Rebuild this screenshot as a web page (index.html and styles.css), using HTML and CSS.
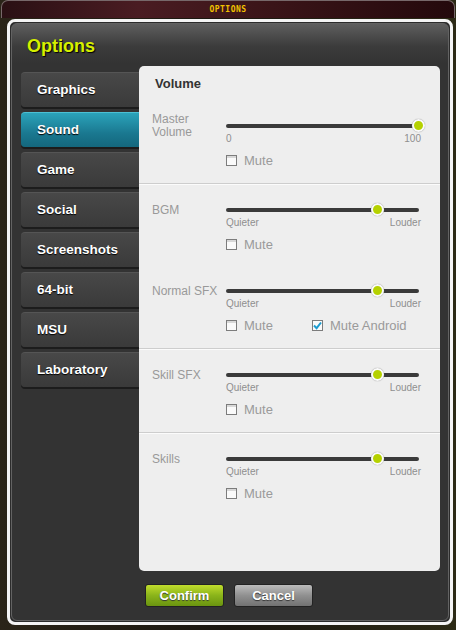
FILE: index.html
```html
<!DOCTYPE html>
<html>

<head>
	<title>Options</title>
	<link rel="stylesheet" href="styles.css">
</head>

<body>
	<div class="window">
		<div class="titlebar">OPTIONS</div>
		<div class="frame">
			<div class="frame-inner">
				<h1 class="title">Options</h1>
				<div class="content">
					<ul class="tabs">
						<li class="tab">Graphics</li>
						<li class="tab active">Sound</li>
						<li class="tab">Game</li>
						<li class="tab">Social</li>
						<li class="tab">Screenshots</li>
						<li class="tab">64-bit</li>
						<li class="tab">MSU</li>
						<li class="tab">Laboratory</li>
					</ul>

					<div class="panel">
						<div class="group first">
							<h2>Volume</h2>
							<div class="setting master">
								<div class="label">Master<br>Volume</div>
								<div class="control">
									<div class="slider">
										<div class="track"></div>
										<div class="thumb" style="left: 100%"></div>
									</div>
									<div class="scale"><span>0</span><span>100</span></div>
									<div class="checks">
										<label class="check"><span class="box"></span>Mute</label>
									</div>
								</div>
							</div>
						</div>

						<div class="group">
							<div class="setting">
								<div class="label">BGM</div>
								<div class="control">
									<div class="slider">
										<div class="track"></div>
										<div class="thumb" style="left: 78.8%"></div>
									</div>
									<div class="scale"><span>Quieter</span><span>Louder</span></div>
									<div class="checks">
										<label class="check"><span class="box"></span>Mute</label>
									</div>
								</div>
							</div>
							<div class="setting next">
								<div class="label">Normal SFX</div>
								<div class="control">
									<div class="slider">
										<div class="track"></div>
										<div class="thumb" style="left: 78.8%"></div>
									</div>
									<div class="scale"><span>Quieter</span><span>Louder</span></div>
									<div class="checks">
										<label class="check"><span class="box"></span>Mute</label>
										<label class="check"><span class="box checked"><svg width="9" height="9" viewBox="0 0 9 9"><path d="M1 4.5 L3.6 7.2 L8 1.5" fill="none" stroke="#1c9cd0" stroke-width="2"/></svg></span>Mute Android</label>
									</div>
								</div>
							</div>
						</div>

						<div class="group">
							<div class="setting">
								<div class="label">Skill SFX</div>
								<div class="control">
									<div class="slider">
										<div class="track"></div>
										<div class="thumb" style="left: 78.8%"></div>
									</div>
									<div class="scale"><span>Quieter</span><span>Louder</span></div>
									<div class="checks">
										<label class="check"><span class="box"></span>Mute</label>
									</div>
								</div>
							</div>
						</div>

						<div class="group">
							<div class="setting">
								<div class="label">Skills</div>
								<div class="control">
									<div class="slider">
										<div class="track"></div>
										<div class="thumb" style="left: 78.8%"></div>
									</div>
									<div class="scale"><span>Quieter</span><span>Louder</span></div>
									<div class="checks">
										<label class="check"><span class="box"></span>Mute</label>
									</div>
								</div>
							</div>
						</div>
					</div>
				</div>

				<div class="actions">
					<button class="btn confirm">Confirm</button>
					<button class="btn cancel">Cancel</button>
				</div>
			</div>
		</div>
	</div>
</body>

</html>
```

FILE: styles.css
```css
body {
	margin: 0;
	background-color: #1f1b12;
	font-family: "Liberation Sans", Arial, sans-serif;
}

.window {
	width: 456px;
	height: 630px;
	overflow: hidden;
	background: linear-gradient(90deg, #2a2418, #1b1710 50%, #2c2a16);
}

.titlebar {
	box-sizing: border-box;
	height: 18px;
	margin: 0 1px;
	border: 1px solid #77686a;
	border-bottom: none;
	border-radius: 7px 7px 0 0;
	background: linear-gradient(90deg, #2a1014, #4a1c22 30%, #3a1418 60%, #24090c);
	color: #f2c200;
	font: bold 8px/17px "DejaVu Sans Mono", monospace;
	letter-spacing: 0.5px;
	text-align: center;
}

.frame {
	width: 446px;
	box-sizing: border-box;
	margin: 1px 3px 0 7px;
	border: 3px solid #f4f4f4;
	border-radius: 8px;
	background-color: #2c2c2c;
}

.frame-inner {
	margin: 1px;
	border: 1px solid #626262;
	border-radius: 6px;
	padding: 11px 8px 13px 9px;
	background: linear-gradient(#5e5e5e, #3c3c3c 22px, #333333 40px);
}

.title {
	margin: 0 0 9px 6px;
	height: 22px;
	font-size: 18px;
	line-height: 22px;
	font-weight: bold;
	color: #d6f000;
	text-shadow: 1px 1px 1px #000;
}

.content {
	display: flex;
}

.tabs {
	list-style: none;
	margin: 0;
	padding: 6px 0 0;
	width: 118px;
	display: flex;
	flex-direction: column;
	gap: 5px;
}

.tab {
	box-sizing: border-box;
	height: 35px;
	padding-left: 16px;
	border-radius: 4px 0 0 4px;
	border-top: 1px solid #555;
	background: linear-gradient(#484848, #3a3a3a);
	box-shadow: 0 2px 0 #1c1c1c;
	color: #fff;
	font-size: 13.5px;
	font-weight: bold;
	line-height: 34px;
	text-shadow: 0 1px 1px #000;
}

.tab.active {
	border-top-color: #4cc0d4;
	background: linear-gradient(#2ba3ba, #1a7890 60%, #14677d);
}

.panel {
	box-sizing: border-box;
	width: 301px;
	height: 505px;
	border-radius: 5px;
	background-color: #eeeeee;
}

.group {
	padding: 20px 0 15px;
	border-top: 1px solid #cdcdcd;
	box-shadow: inset 0 1px 0 #fbfbfb;
}

.group.first {
	padding-top: 11px;
	border-top: none;
	box-shadow: none;
}

.group h2 {
	margin: 0 0 29px 16px;
	height: 14px;
	font-size: 13px;
	line-height: 14px;
	color: #333;
}

.setting {
	display: grid;
	grid-template-columns: 74px 195px;
	padding-left: 13px;
}

.setting.next {
	margin-top: 33px;
}

.label {
	font-size: 12px;
	line-height: 12px;
	color: #999;
	white-space: nowrap;
}

.master .label {
	margin-top: -7px;
	line-height: 13px;
}

.slider {
	position: relative;
	width: 193px;
	height: 12px;
}

.track {
	position: relative;
	top: 4px;
	height: 4px;
	border-radius: 2px;
	background-color: #3a3a3a;
}

.thumb {
	position: absolute;
	top: -1px;
	margin-left: -7px;
	width: 9px;
	height: 9px;
	border: 2px solid #fafafa;
	border-radius: 50%;
	background-color: #b5d100;
	box-shadow: 0 0 1px #777;
}

.scale {
	display: flex;
	justify-content: space-between;
	height: 14px;
	font-size: 10px;
	line-height: 14px;
	color: #8e8e8e;
}

.checks {
	display: flex;
	margin-top: 6px;
	height: 16px;
}

.check {
	display: flex;
	align-items: center;
	width: 86px;
	font-size: 13px;
	color: #9a9a9a;
	white-space: nowrap;
}

.box {
	box-sizing: border-box;
	display: flex;
	align-items: center;
	justify-content: center;
	width: 11px;
	height: 11px;
	margin-right: 7px;
	border: 1px solid #7c7c7c;
	background: linear-gradient(#d8d8d8 0, #d8d8d8 2px, #fafafa 2px);
}

.box.checked {
	background: #fafafa;
}

.actions {
	display: flex;
	justify-content: center;
	gap: 10px;
	margin-top: 13px;
	padding-right: 3px;
}

.btn {
	width: 79px;
	height: 23px;
	padding: 0;
	border: 1px solid #222;
	border-radius: 3px;
	color: #fff;
	font-family: "Liberation Sans", Arial, sans-serif;
	font-size: 13px;
	font-weight: bold;
	text-shadow: 0 1px 1px #333;
}

.btn.confirm {
	background: linear-gradient(#c0dc2c, #8ab41a 50%, #6a9410);
}

.btn.cancel {
	background: linear-gradient(#bcbcbc, #909090 50%, #727272);
}
```
